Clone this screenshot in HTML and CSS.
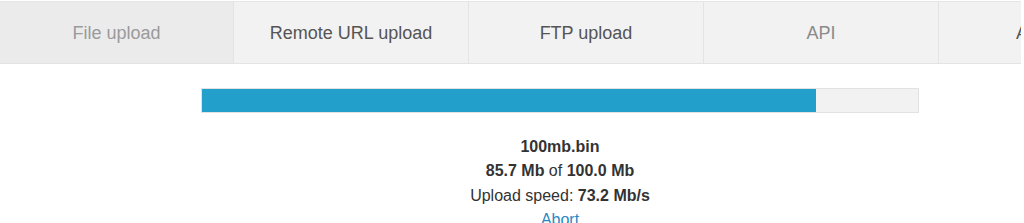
FILE: index.html
```html
<!DOCTYPE html>
<html>
<head>
<meta charset="utf-8">
<link rel="stylesheet" href="styles.css">
</head>
<body>
<div class="page">
  <nav class="tabs">
    <div class="tab active">File upload</div>
    <div class="tab">Remote URL upload</div>
    <div class="tab">FTP upload</div>
    <div class="tab light">API</div>
    <div class="tab">Advanced</div>
  </nav>
  <div class="upload">
    <div class="progress"><div class="fill" style="width:85.8%"></div></div>
    <div class="info">
      <div class="line"><b>100mb.bin</b></div>
      <div class="line"><b>85.7 Mb</b> of <b>100.0 Mb</b></div>
      <div class="line">Upload speed: <b>73.2 Mb/s</b></div>
      <div class="line"><a href="#" class="abort">Abort</a></div>
    </div>
  </div>
</div>
</body>
</html>
```
FILE: styles.css
```css
html, body { margin: 0; padding: 0; background: #fff; }
body { font-family: "Liberation Sans", Arial, sans-serif; color: #333; height: 223px; overflow: hidden; }
.page { width: 1021px; overflow: hidden; }
.tabs {
  display: flex;
  margin-top: 1px;
  border-top: 1px solid #e6e6e6;
  border-bottom: 1px solid #e3e3e3;
  height: 61px;
}
.tab {
  flex: 0 0 235px;
  display: flex;
  align-items: center;
  justify-content: center;
  background: #f2f2f2;
  border-right: 1px solid #e4e4e4;
  font-size: 18px;
  color: #555;
  white-space: nowrap;
  padding-top: 1px;
  box-sizing: border-box;
}
.tab.active { flex-basis: 234px; background: #ebebeb; color: #9a9a9a; }
.tab.light { color: #8a8a8a; }
.upload { padding-top: 24px; width: 718px; margin-left: 201px; }
.progress {
  height: 23px;
  background: #f2f2f2;
  border: 1px solid #e2e2e2;
  display: flex;
}
.fill { background: #229fca; height: 100%; }
.info { margin-top: 22px; text-align: center; font-size: 16px; line-height: 24.4px; color: #333; }
.info b { color: #333; }
.abort { color: #2a87c3; text-decoration: none; }
```
